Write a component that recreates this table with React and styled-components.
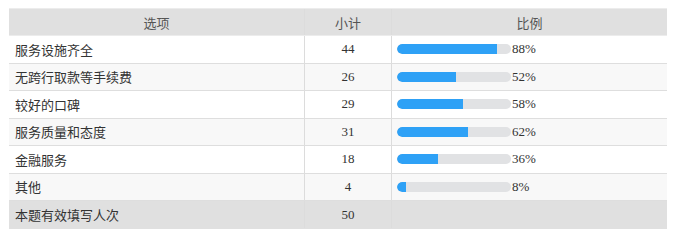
import React from "react";
import styled, { createGlobalStyle } from "styled-components";

const Global = createGlobalStyle`
  html, body {
    margin: 0;
    padding: 0;
    background: #fff;
  }
  body {
    font-family: "Liberation Serif", "Noto Sans CJK SC", serif;
    font-size: 13px;
    color: #333;
  }
`;

const Table = styled.div`
  margin: 8px 0 0 9px;
  width: 658px;
  border-top: 1px solid #ececec;
`;

const Row = styled.div`
  display: flex;
  box-sizing: border-box;
  height: ${(p) => p.$h}px;
  background: ${(p) => p.$bg};
  border-bottom: 1px solid ${(p) => p.$line || "#dedede"};
`;

const Cell = styled.div`
  box-sizing: border-box;
  display: flex;
  align-items: center;
  width: ${(p) => p.$w}px;
  flex: ${(p) => (p.$w ? "none" : "1")};
  justify-content: ${(p) => p.$align || "flex-start"};
  padding: ${(p) => p.$pad || "0"};
  border-right: ${(p) => (p.$last ? "none" : "1px solid #dcdcdc")};
  color: ${(p) => p.$color || "#333"};
  white-space: nowrap;
`;

const Track = styled.div`
  width: 114px;
  height: 10px;
  border-radius: 5px;
  background: #e1e2e4;
  overflow: hidden;
  margin-left: 5px;
`;

const Fill = styled.div`
  height: 100%;
  background: #2ea1f6;
  border-radius: 5px 0 0 5px;
`;

const Pct = styled.span`
  margin-left: 1px;
`;

const rows = [
  ["服务设施齐全", 44, 88],
  ["无跨行取款等手续费", 26, 52],
  ["较好的口碑", 29, 58],
  ["服务质量和态度", 31, 62],
  ["金融服务", 18, 36],
  ["其他", 4, 8],
];

export default function App() {
  return (
    <>
      <Global />
      <Table>
        <Row $h={27} $bg="#e0e0e0" $line="#ececec">
          <Cell $w={296} $align="center" $color="#555">选项</Cell>
          <Cell $w={87} $align="center" $color="#555">小计</Cell>
          <Cell $align="center" $color="#555" $last>比例</Cell>
        </Row>
        {rows.map(([name, n, p], i) => (
          <Row key={name} $h={27.5} $bg={i % 2 ? "#f8f8f8" : "#fff"}>
            <Cell $w={296} $pad="0 0 0 6px">{name}</Cell>
            <Cell $w={87} $align="center">{n}</Cell>
            <Cell $last>
              <Track>
                <Fill style={{ width: `${p}%` }} />
              </Track>
              <Pct>{p}%</Pct>
            </Cell>
          </Row>
        ))}
        <Row $h={28} $bg="#e0e0e0" $line="#e0e0e0">
          <Cell $w={296} $pad="0 0 0 6px">本题有效填写人次</Cell>
          <Cell $w={87} $align="center">50</Cell>
          <Cell $last />
        </Row>
      </Table>
    </>
  );
}
